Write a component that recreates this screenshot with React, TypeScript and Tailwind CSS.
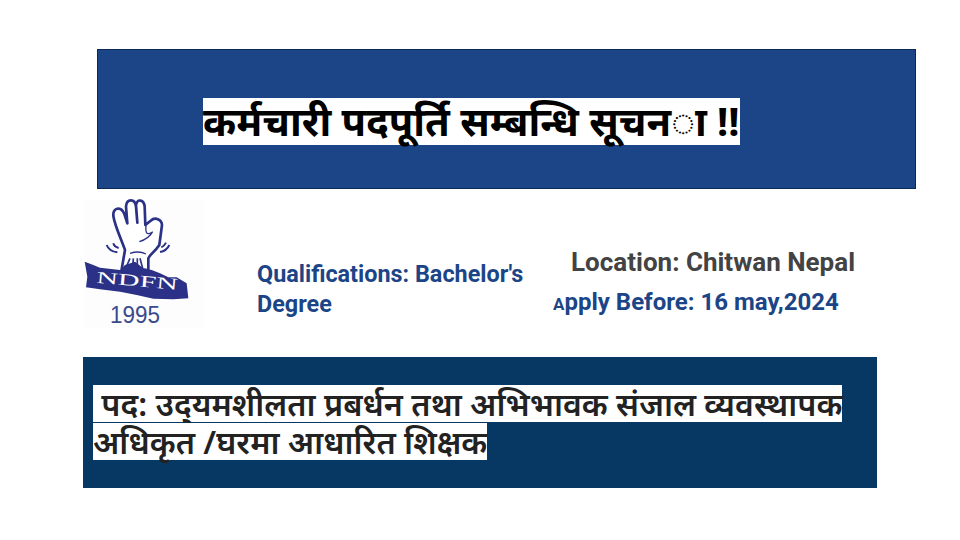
export default function App() {
  const dev = { fontFamily: '"Noto Sans", "DejaVu Sans", sans-serif' };
  return (
    <div className="w-[960px] h-[540px] bg-white overflow-hidden flex flex-col font-['Roboto',sans-serif]">
      <div className="ml-[97px] mt-[49px] w-[819px] h-[140px] bg-[#1c4587] border border-[#0b2a52] pl-[105px] pt-[48px]">
        <span className="bg-white text-black text-[40px] font-bold leading-[45px] pb-[2px] inline-block whitespace-nowrap" style={dev}>कर्मचारी पदपूर्ति सम्बन्धि सूचन◌ा !!</span>
      </div>
      <div className="flex h-[168px]">
        <svg className="ml-[80px] mt-[1px] shrink-0" width="140" height="150" viewBox="0 0 420 450">
          <rect x="12" y="30" width="360" height="385" fill="#fdfdfd" />
          <path d="M125 238 L135 180 C125 150 105 110 100 78 C98 55 122 45 133 72 L142 100 L138 50 C140 25 165 25 168 50 L172 98 L168 45 C172 25 192 28 194 50 L196 105 L212 92 C225 80 245 88 246 105 L238 165 C225 185 208 195 205 205 L205 240 Z" fill="#fff" stroke="#2a3186" strokeWidth="8" strokeLinejoin="round" />
          <path d="M198 105 C196 130 200 135 215 128 M178 155 C195 150 210 140 218 125 M150 190 C165 185 185 185 198 192" fill="none" stroke="#2a3186" strokeWidth="4" />
          <path d="M80 165 C85 178 95 185 112 187 M100 160 C102 168 108 172 116 174 M268 165 C262 178 252 184 240 186 M258 158 C254 166 250 170 244 172" fill="none" stroke="#2a3186" strokeWidth="6" />
          <path d="M14 215 L40 225 L60 233 L120 240 L135 225 L165 215 L190 235 L215 240 L240 250 L265 262 L290 262 L320 280 L325 325 L280 328 L220 326 L170 315 L120 305 L60 298 L18 292 L22 260 Z" fill="#2a3186" />
          <path d="M140 228 L150 205 M158 235 L160 205 M172 235 L172 205 M188 235 L180 205" stroke="#2a3186" strokeWidth="5" />
          <text x="48" y="278" fill="#fff" fontSize="50" textLength="245" lengthAdjust="spacingAndGlyphs" transform="rotate(5 48 278)" fontFamily="Liberation Serif">NDFN</text>
          <text x="90" y="398" fill="#3a4a8c" fontSize="74" textLength="150" lengthAdjust="spacingAndGlyphs" fontFamily="Liberation Sans">1995</text>
        </svg>
        <div className="ml-[37px] mt-[70px] w-[280px] text-[#1c4587] text-[23.4px] leading-[30px] font-bold">Qualifications: Bachelor's Degree</div>
        <div className="ml-[16px] mt-[56px] w-[310px]">
          <div className="text-[#434343] text-[26px] font-bold leading-[34px] pl-[18px] whitespace-nowrap">Location: Chitwan Nepal</div>
          <div className="text-[#1c4587] text-[24px] font-bold leading-[32px] mt-[7px] whitespace-nowrap"><span className="text-[17px]">A</span>pply Before: 16 may,2024</div>
        </div>
      </div>
      <div className="ml-[83px] w-[794px] h-[131px] bg-[#073763] pl-[10px] pt-[28px] flex flex-col items-start gap-px text-[#222222] text-[32.2px] font-semibold" style={dev}>
        <span className="bg-white h-[37px] leading-[37px] whitespace-pre">{" पद: उद्\u200Cयमशीलता प्रबर्धन तथा अभिभावक संजाल व्यवस्थापक"}</span>
        <span className="bg-white h-[37px] leading-[37px] whitespace-pre">अधिकृत /घरमा आधारित शिक्षक</span>
      </div>
    </div>
  );
}
